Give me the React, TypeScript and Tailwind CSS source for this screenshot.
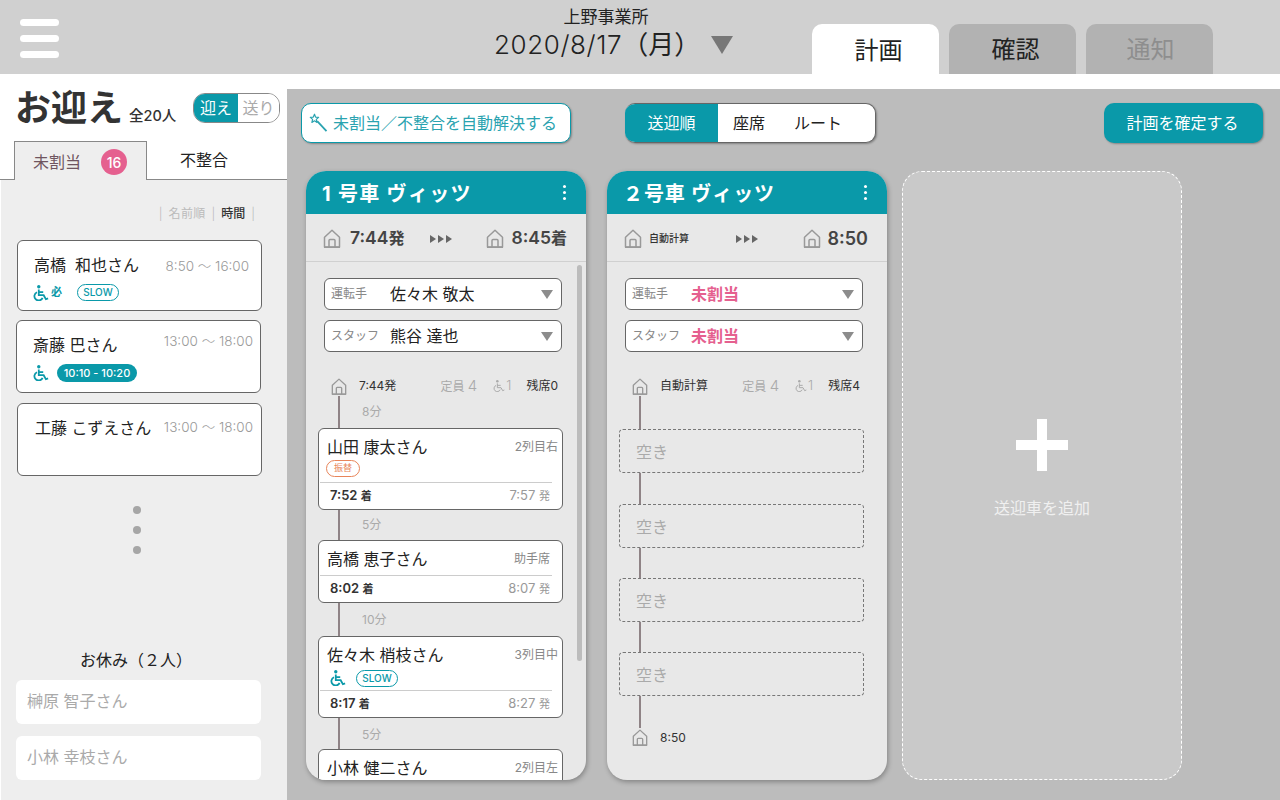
const TEAL = 'bg-[#0a99a9]';

const HomeIcon = ({ className = 'w-[18px] h-[19px]' }: { className?: string }) => (
  <svg viewBox="0 0 18 19" className={`shrink-0 ${className}`} fill="none" stroke="#999" strokeWidth="1.5">
    <path d="M1.5 18V8.2L9 1.2l7.500 7V18z" strokeLinejoin="round" />
    <path d="M6 18v-6.500a1 1 0 0 1 1-1h4a1 1 0 0 1 1 1V18" />
    <path d="M1 18.200h16" />
  </svg>
);

const Wheel = ({ className = 'w-[16px] h-[16px] text-[#0a99a9]', sw = 2 }: { className?: string; sw?: number }) => (
  <svg viewBox="0 0 18 18" className={`shrink-0 ${className}`} fill="none" stroke="currentColor" strokeWidth={sw}>
    <circle cx="6.500" cy="2" r="1.900" fill="currentColor" stroke="none" />
    <path d="M6.500 5v6.500h5.500l2.500 4.500 2.500-1" />
    <path d="M6.500 8h5" />
    <path d="M4.500 8.200a4.800 4.800 0 1 0 6.300 6.300" />
  </svg>
);

const Arrows = () => (
  <svg viewBox="0 0 22 8" className="w-[22px] h-[8px] shrink-0" fill="#666">
    <path d="M0 0l6 4-6 4zM8 0l6 4-6 4zM16 0l6 4-6 4z" />
  </svg>
);

const Caret = () => (
  <svg viewBox="0 0 12 9" className="w-[12px] h-[9px] shrink-0" fill="#8c8c8c">
    <path d="M0 0h12L6 9z" />
  </svg>
);

const Slow = () => (
  <span className="flex items-center justify-center w-[42px] h-[17px] rounded-full border border-[#0a99a9] text-[10px] font-medium text-[#0a99a9]">
    SLOW
  </span>
);

const Person = ({ name, time, ml, h, mt, nameCls, timeCls, children }: {
  name: string; time: string; ml: string; h: string; mt: string; nameCls: string; timeCls: string; children?: React.ReactNode;
}) => (
  <div className={`${ml} ${h} ${mt} w-[245px] shrink-0 bg-white border border-[#666] rounded-[6px] flex flex-col`}>
    <div className="flex justify-between items-start">
      <span className={`text-[16px] leading-[20px] text-[#222] ${nameCls}`}>{name}</span>
      <span className={`text-[13.5px] leading-[18px] font-light text-[#999] ${timeCls}`}>{time}</span>
    </div>
    {children}
  </div>
);

const Select = ({ label, value, pink, mt }: { label: string; value: string; pink?: boolean; mt: string }) => (
  <div className={`${mt} ml-[18px] w-[238px] h-[32px] shrink-0 bg-white border border-[#666] rounded-[6px] flex items-center pl-[6px] pr-[8px]`}>
    <span className="w-[59px] text-[12px] text-[#888] whitespace-nowrap">{label}</span>
    <span className={pink ? 'text-[16px] font-bold text-[#e5608f]' : 'text-[16px] text-[#222]'}>{value}</span>
    <span className="ml-auto"><Caret /></span>
  </div>
);

const Gap = ({ h, text, top = 'mt-[7px]' }: { h: string; text?: string; top?: string }) => (
  <div className={`${h} flex shrink-0`}>
    <div className="ml-[32px] w-[2px] bg-[#8f8386]" />
    {text && <span className={`ml-[22px] ${top} text-[12px] leading-[18px] text-[#aaa]`}>{text}</span>}
  </div>
);

type Stop = { name: string; seat: string; arrive?: string; leave?: string; seatPr: string; badges?: React.ReactNode };

const StopCard = ({ name, seat, arrive, leave, seatPr, badges }: Stop) => (
  <div className="ml-[12px] w-[245px] shrink-0 bg-white border border-[#666] rounded-[6px] flex flex-col">
    <div className="flex justify-between items-center pl-[8px] pt-[8px] h-[28px]">
      <span className="text-[16px] leading-[20px] text-[#222]">{name}</span>
      <span className={`text-[12px] text-[#888] ${seatPr}`}>{seat}</span>
    </div>
    {badges && <div className="h-[16px] mt-[3px] flex items-center pl-[7px]">{badges}</div>}
    <div className="mt-[6px] mx-[1px] w-[232px] h-px bg-[#ccc]" />
    {arrive && (
      <div className="h-[26px] flex items-center justify-between pl-[11px] pr-[12px]">
        <span className="text-[13px] font-semibold text-[#333]">{arrive} <span className="text-[11px]">着</span></span>
        <span className="text-[13px] text-[#999]">{leave} <span className="text-[11px]">発</span></span>
      </div>
    )}
  </div>
);

const CarHeader = ({ title, tracking }: { title: string; tracking: string }) => (
  <div className={`${TEAL} h-[43px] shrink-0 flex items-center pl-[16px] pr-[20px]`}>
    <span className={`mt-[2px] text-[20px] font-bold text-white whitespace-nowrap ${tracking}`}>{title}</span>
    <span className="ml-auto flex flex-col gap-[3px]">
      <i className="w-[3px] h-[3px] rounded-full bg-white" />
      <i className="w-[3px] h-[3px] rounded-full bg-white" />
      <i className="w-[3px] h-[3px] rounded-full bg-white" />
    </span>
  </div>
);

const Info = ({ label, remain, ml, w }: { label: string; remain: string; ml: string; w: string }) => (
  <div className={`${ml} mt-[24px] h-[20px] ${w} flex items-center text-[12px] shrink-0`}>
    <HomeIcon className="w-[16px] h-[19px]" />
    <span className="ml-[12px] text-[#333]">{label}</span>
    <span className="ml-auto text-[#aaa]">定員 <span className="text-[15px] font-light">4</span></span>
    <span className="ml-[16px] flex items-center text-[#aaa]"><Wheel className="w-[12px] h-[12px] text-[#aaa]" sw={1.500} /><span className="ml-[1px] text-[13px] font-light">1</span></span>
    <span className="ml-[15px] text-[#333]">{remain}</span>
  </div>
);

const Empty = () => (
  <div className="ml-[12px] w-[245px] h-[44px] shrink-0 border border-dashed border-[#777] rounded-[4px] flex items-center pl-[16px] pt-[2px] text-[16px] text-[#aaa]">
    空き
  </div>
);

export default function App() {
  return (
    <div className="w-screen h-screen overflow-hidden flex flex-col font-['Inter','Noto_Sans_CJK_JP',sans-serif] text-[#222]">
      <header className="h-[74px] shrink-0 bg-[#d0d0d0] flex items-end">
        <div className="self-start mt-[19px] ml-[20px] w-[39px] flex flex-col gap-[9px]">
          <i className="h-[7px] rounded-full bg-white" />
          <i className="h-[7px] rounded-full bg-white" />
          <i className="h-[7px] rounded-full bg-white" />
        </div>
        <div className="self-start ml-[435px] mt-[7px] flex items-start">
          <div className="flex flex-col items-center w-[228px]">
            <span className="text-[17px] leading-[20px] -ml-[4px]">上野事業所</span>
            <div className="text-[26px] leading-[36px] w-full whitespace-nowrap">
              <span className="font-light tracking-[0.6px]">2020/8/17</span><span>（月）</span>
            </div>
          </div>
          <svg viewBox="0 0 22 18" className="w-[22px] h-[18px] mt-[29px] ml-[-11px]" fill="#777">
            <path d="M0 0h22L11 18z" />
          </svg>
        </div>
        <div className="ml-[79px] w-[127px] h-[50px] rounded-t-[10px] bg-white flex items-center justify-center text-[24px] pt-[4px] pl-[6px]">計画</div>
        <div className="ml-[10px] w-[127px] h-[50px] rounded-t-[10px] bg-[#b2b2b2] flex items-center justify-center text-[24px] pt-[2px] pl-[6px]">確認</div>
        <div className="ml-[10px] w-[127px] h-[50px] rounded-t-[10px] bg-[#b2b2b2] flex items-center justify-center text-[24px] pt-[1px] pl-[2px] text-[#8e8e8e]">通知</div>
      </header>

      <div className="flex-1 flex min-h-0">
        <aside className="w-[287px] shrink-0 flex flex-col bg-white">
          <div className="h-[67px] shrink-0 flex items-start">
            <span className="ml-[15px] w-[114px] mt-[12px] text-[36px] leading-[44px] font-bold text-[#333] whitespace-nowrap">お迎え</span>
            <span className="w-[64px] mt-[32px] text-[14.5px] leading-[20px] font-medium text-[#333] whitespace-nowrap">全20人</span>
            <div className="mt-[19px] w-[87px] h-[30px] rounded-[12px] border border-[#888] flex overflow-hidden text-[16px]">
              <span className={`${TEAL} w-[44px] flex items-center justify-center text-white`}>迎え</span>
              <span className="flex-1 flex items-center justify-center text-[#aaa] bg-white">送り</span>
            </div>
          </div>
          <div className="h-[39px] shrink-0 flex border-b border-[#888]">
            <div className="ml-[14px] w-[133px] h-[39px] bg-[#eee] border border-b-0 border-[#888] flex items-center pl-[18px] pt-[2px] text-[16px] text-[#6f5560]">
              未割当
              <span className="ml-[20px] w-[26px] h-[26px] rounded-full bg-[#e5608f] flex items-center justify-center text-[14px] font-medium text-white">16</span>
            </div>
            <span className="ml-[33px] self-center text-[16px] text-[#222]">不整合</span>
          </div>
          <div className="flex-1 bg-[#eee] border-l border-white flex flex-col min-h-0">
            <div className="mt-[25px] h-[18px] pr-[32px] flex justify-end items-center text-[12px] text-[#bbb]">
              <span className="font-light">|</span>
              <span className="ml-[6px] tracking-[0.3px]">名前順</span>
              <span className="ml-[6px] font-light">|</span>
              <span className="ml-[6px] text-[#333] font-medium">時間</span>
              <span className="ml-[6px] font-light">|</span>
            </div>
            <Person name="高橋&nbsp;&nbsp;和也さん" time="8:50 ～ 16:00" ml="ml-[16px]" h="h-[71px]" mt="mt-[17px]" nameCls="ml-[16px] mt-[14px]" timeCls="mt-[16px] mr-[12px]">
              <div className="mt-[9px] ml-[15px] flex items-center text-[#0a99a9]">
                <Wheel />
                <span className="ml-[2px] text-[11px] font-bold">必</span>
                <span className="ml-[15px]"><Slow /></span>
              </div>
            </Person>
            <Person name="斎藤 巴さん" time="13:00 ～ 18:00" ml="ml-[15px]" h="h-[73px]" mt="mt-[9px]" nameCls="ml-[16px] mt-[14px]" timeCls="mt-[11px] mr-[7px]">
              <div className="mt-[9px] ml-[16px] flex items-center">
                <Wheel />
                <span className={`${TEAL} ml-[8px] w-[80px] h-[18px] rounded-full flex items-center justify-center text-[11px] font-medium text-white`}>10:10 - 10:20</span>
              </div>
            </Person>
            <Person name="工藤 こずえさん" time="13:00 ～ 18:00" ml="ml-[16px]" h="h-[73px]" mt="mt-[10px]" nameCls="ml-[17px] mt-[14px]" timeCls="mt-[14px] mr-[8px]" />
            <div className="mt-[30px] ml-[132px] flex flex-col gap-[12px]">
              <i className="w-[8px] h-[8px] rounded-full bg-[#a6a6a6]" />
              <i className="w-[8px] h-[8px] rounded-full bg-[#a6a6a6]" />
              <i className="w-[8px] h-[8px] rounded-full bg-[#a6a6a6]" />
            </div>
            <div className="mt-[94px] ml-[79px] h-[24px] text-[16px] leading-[24px] text-[#222]">お休み（２人）</div>
            <div className="mt-[8px] ml-[15px] w-[245px] h-[44px] bg-white rounded-[6px] flex items-center pl-[11px] pb-[2px] text-[16px] text-[#aaa]">榊原 智子さん</div>
            <div className="mt-[12px] ml-[15px] w-[245px] h-[44px] bg-white rounded-[6px] flex items-center pl-[11px] pb-[2px] text-[16px] text-[#aaa]">小林 幸枝さん</div>
          </div>
        </aside>

        <main className="flex-1 flex flex-col min-w-0">
          <div className="h-[15px] shrink-0 bg-white" />
          <div className="flex-1 bg-[#bcbcbc] flex flex-col min-h-0">
            <div className="mt-[14px] h-[40px] shrink-0 flex">
              <button className="ml-[14px] w-[270px] rounded-[10px] bg-white border border-[#0a99a9] shadow-[1px_1px_2px_rgba(0,0,0,0.3)] flex items-center pl-[6px] text-[16px] text-[#2aa3b0]">
                <svg viewBox="0 0 20 20" className="w-[20px] h-[20px] shrink-0" fill="none" stroke="#2aa3b0" strokeWidth="1.2" strokeLinejoin="round">
                  <path d="M6.500 1.200l1.100 2.900 3 .3-2.300 2 .7 3-2.500-1.600-2.600 1.600.7-3-2.300-2 3-.3z" />
                  <path d="M9.200 8.200l9.300 10" strokeWidth="1.800" />
                </svg>
                <span className="ml-[5px] whitespace-nowrap">未割当／不整合を自動解決する</span>
              </button>
              <div className="ml-[54px] w-[251px] rounded-[10px] bg-white border border-[#666] border-l-0 shadow-[1px_1px_2px_rgba(0,0,0,0.3)] flex overflow-hidden text-[16px]">
                <span className={`${TEAL} w-[93px] flex items-center justify-center text-white`}>送迎順</span>
                <span className="ml-[15px] self-center">座席</span>
                <span className="ml-[29px] self-center">ルート</span>
              </div>
              <button className={`${TEAL} ml-auto mr-[17px] w-[159px] pr-[2px] rounded-[10px] shadow-[1px_1px_2px_rgba(0,0,0,0.3)] text-[16px] text-white`}>計画を確定する</button>
            </div>

            <div className="mt-[28px] ml-[19px] h-[609px] flex shrink-0">
              <section className="w-[280px] h-full rounded-[20px] overflow-hidden bg-[#e8e8e8] shadow-[1px_2px_5px_rgba(0,0,0,0.3)] flex flex-col relative">
                <CarHeader title="1 号車 ヴィッツ" tracking="tracking-[1.3px]" />
                <div className="h-[48px] shrink-0 border-b border-[#d0d0d0] flex items-center pt-[2px] pl-[17px] pr-[19px] text-[17.5px] font-semibold text-[#444]">
                  <HomeIcon />
                  <span className="ml-[9px]">7:44<span className="text-[16px]">発</span></span>
                  <span className="ml-[26px]"><Arrows /></span>
                  <span className="ml-auto"><HomeIcon /></span>
                  <span className="ml-[8px]">8:45<span className="text-[16px]">着</span></span>
                </div>
                <Select mt="mt-[16px]" label="運転手" value="佐々木 敬太" />
                <Select mt="mt-[10px]" label="スタッフ" value="熊谷 達也" />
                <Info ml="ml-[25px]" w="w-[227px]" label="7:44発" remain="残席0" />
                <Gap h="h-[32px]" text="8分" />
                <StopCard name="山田 康太さん" seat="2列目右" seatPr="pr-[4px]" arrive="7:52" leave="7:57" badges={
                  <span className="w-[34px] h-[17px] rounded-full border border-[#e8855a] flex items-center justify-center text-[9px] text-[#e8855a]">振替</span>
                } />
                <Gap h="h-[30px]" text="5分" top="mt-[6px]" />
                <StopCard name="高橋 恵子さん" seat="助手席" seatPr="pr-[12px]" arrive="8:02" leave="8:07" />
                <Gap h="h-[33px]" text="10分" top="mt-[8px]" />
                <StopCard name="佐々木 梢枝さん" seat="3列目中" seatPr="pr-[4px]" arrive="8:17" leave="8:27" badges={
                  <>
                    <Wheel className="w-[16px] h-[16px] ml-[4px] translate-y-[2px] text-[#0a99a9]" />
                    <span className="ml-[10px] translate-y-[2px]"><Slow /></span>
                  </>
                } />
                <Gap h="h-[31px]" text="5分" top="mt-[8px]" />
                <StopCard name="小林 健二さん" seat="2列目左" seatPr="pr-[4px]" />
                <div className="absolute left-[271px] top-[94px] w-[5px] h-[396px] rounded-full bg-[#bcbcbc]" />
              </section>

              <section className="ml-[21px] w-[280px] h-full rounded-[20px] overflow-hidden bg-[#e8e8e8] shadow-[1px_2px_5px_rgba(0,0,0,0.3)] flex flex-col">
                <CarHeader title="２号車 ヴィッツ" tracking="tracking-[0.9px]" />
                <div className="h-[48px] shrink-0 border-b border-[#d0d0d0] flex items-center pt-[2px] pl-[17px] pr-[19px] text-[#333]">
                  <HomeIcon />
                  <span className="ml-[7px] text-[10px] font-medium">自動計算</span>
                  <span className="ml-[47px]"><Arrows /></span>
                  <span className="ml-auto"><HomeIcon /></span>
                  <span className="ml-[7px] text-[18px] font-semibold text-[#444]">8:50</span>
                </div>
                <Select mt="mt-[16px]" label="運転手" value="未割当" pink />
                <Select mt="mt-[10px]" label="スタッフ" value="未割当" pink />
                <Info ml="ml-[25px]" w="w-[228px]" label="自動計算" remain="残席4" />
                <Gap h="h-[33px]" />
                <Empty />
                <Gap h="h-[31px]" />
                <Empty />
                <Gap h="h-[30px]" />
                <Empty />
                <Gap h="h-[30px]" />
                <Empty />
                <Gap h="h-[32px]" />
                <div className="ml-[25px] flex items-center text-[12px] text-[#333]">
                  <HomeIcon className="w-[16px] h-[19px]" />
                  <span className="ml-[12px]">8:50</span>
                </div>
              </section>

              <section className="ml-[15px] w-[280px] h-full rounded-[20px] bg-[#c9c9c9] border border-dashed border-white flex flex-col items-center">
                <svg viewBox="0 0 52 52" className="w-[52px] h-[52px] mt-[247px]" fill="#fff">
                  <path d="M21 0h10v21h21v10H31v21H21V31H0V21h21z" />
                </svg>
                <span className="mt-[27px] text-[16px] leading-[20px] text-[#f0f0f0]">送迎車を追加</span>
              </section>
            </div>
          </div>
        </main>
      </div>
    </div>
  );
}
